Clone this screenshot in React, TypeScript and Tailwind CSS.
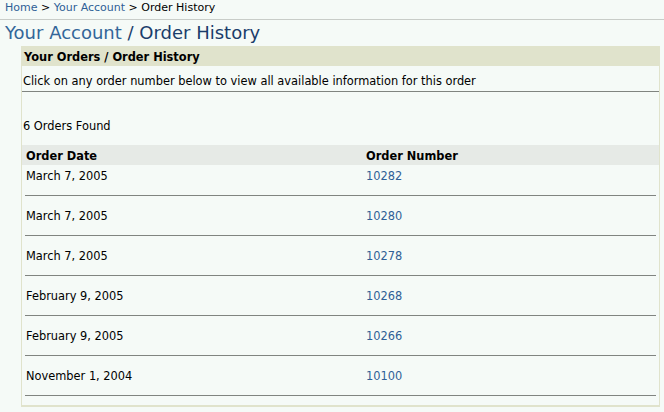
import React from "react";

const orders = [
  { date: "March 7, 2005", num: "10282" },
  { date: "March 7, 2005", num: "10280" },
  { date: "March 7, 2005", num: "10278" },
  { date: "February 9, 2005", num: "10268" },
  { date: "February 9, 2005", num: "10266" },
  { date: "November 1, 2004", num: "10100" },
];

export default function App() {
  return (
    <div
      className="w-[664px] h-[412px] bg-[#f5faf7] text-black text-[11.4px] overflow-hidden"
      style={{ fontFamily: '"DejaVu Sans", Verdana, sans-serif' }}
    >
      <div className="h-[19px] pl-[5px] pt-[1px] leading-[13px] text-[11px] whitespace-pre">
        <a className="text-[#2f5f96]">Home</a>
        <span> &gt; </span>
        <a className="text-[#2f5f96]">Your Account</a>
        <span> &gt; </span>
        <span>Order History</span>
      </div>
      <div className="h-px bg-[#c8ccc8]" />
      <div className="pl-[5px] h-[26px] text-[18px] leading-[24px] pt-[1px]">
        <span className="text-[#336699]">Your Account</span>
        <span className="text-[#1b3d6b]"> / Order History</span>
      </div>
      <div className="ml-[21px] w-[639px] h-[361px] border-l border-r border-b-2 border-[#e0e3cc] flex flex-col">
        <div className="h-[20px] bg-[#e0e3cc] pl-[2px] pt-[4px] flex items-center font-bold">
          Your Orders / Order History
        </div>
        <div className="h-[27px] pl-[1px] pt-[6px] flex items-center border-b border-[#808480]">
          Click on any order number below to view all available information for this order
        </div>
        <div className="h-[54px] pl-[1px] flex items-center pt-[16px]">6 Orders Found</div>
        <div className="h-[20px] bg-[#e6eae6] pt-[3px] flex items-center font-bold">
          <div className="w-[344px] pl-[4px]">Order Date</div>
          <div>Order Number</div>
        </div>
        {orders.map((o) => (
          <div key={o.num}>
            <div className="h-[20px] pt-[4px] flex items-center">
              <div className="w-[344px] pl-[4px]">{o.date}</div>
              <a className="text-[#2f5f96]">{o.num}</a>
            </div>
            <div className="h-[20px] flex items-center px-[3px]">
              <div className="h-px w-full bg-[#808480]" />
            </div>
          </div>
        ))}
      </div>
    </div>
  );
}
